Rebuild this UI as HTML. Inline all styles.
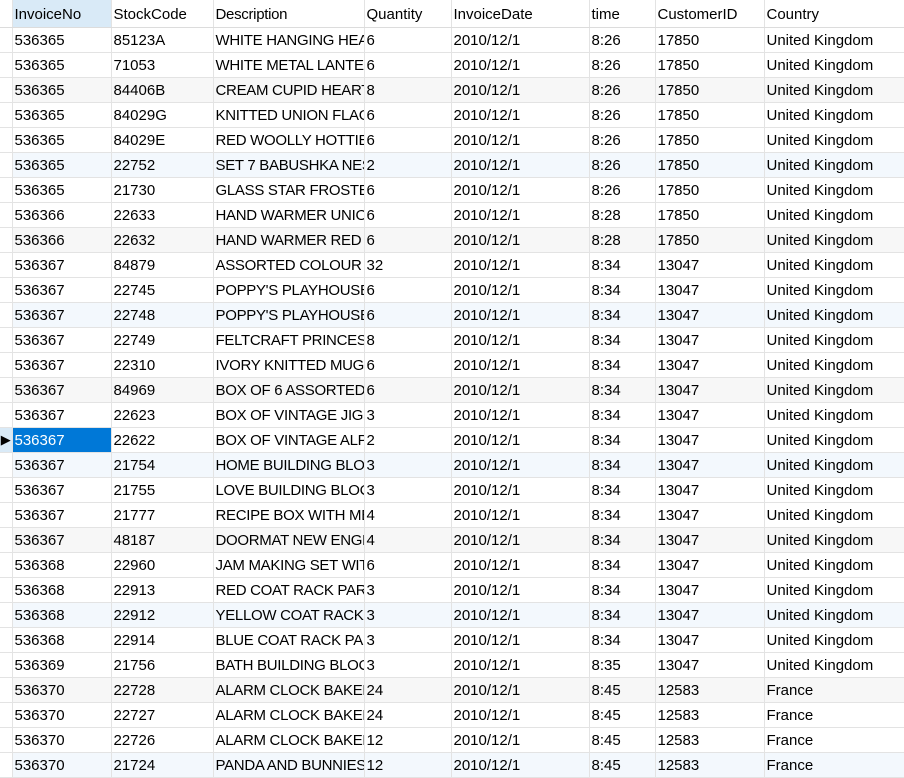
<!DOCTYPE html>
<html><head><meta charset="utf-8"><style>
body{margin:0;padding-top:1px;background:#fff;width:904px;height:773px;overflow:hidden;font-family:"Liberation Sans",sans-serif;font-size:15px;color:#000}
table{border-collapse:collapse;table-layout:fixed;width:904px;margin-top:-1px}
td{height:24px;padding:1px 0 0 2px;box-sizing:border-box;border-right:1px solid #e3e3e3;border-bottom:1px solid #e3e3e3;white-space:nowrap;overflow:hidden;text-overflow:clip;line-height:23px}
tr.h td{height:27px;padding-top:2px;border-bottom:1px solid #dcdcdc}
td.g{padding:0;font-size:13px;text-align:center}
td:nth-child(4){letter-spacing:-0.3px}
tr.a td{background:#f7f7f7}
tr.b td{background:#f3f8fd}
tr.a td.g,tr.b td.g{background:#fff}
.sel{background:#0078d7!important;color:#fff}
tr:not(.h) td{height:25px}
</style></head><body>
<table>
<colgroup><col style="width:12px"><col style="width:99px"><col style="width:102px"><col style="width:151px"><col style="width:87px"><col style="width:138px"><col style="width:66px"><col style="width:109px"><col style="width:140px"></colgroup>
<tr class="h"><td class="g"></td><td style="background:#d9eaf7">InvoiceNo</td><td>StockCode</td><td>Description</td><td>Quantity</td><td>InvoiceDate</td><td>time</td><td>CustomerID</td><td>Country</td></tr>
<tr><td class="g"></td><td>536365</td><td>85123A</td><td>WHITE HANGING HEART</td><td>6</td><td>2010/12/1</td><td>8:26</td><td>17850</td><td>United Kingdom</td></tr>
<tr><td class="g"></td><td>536365</td><td>71053</td><td>WHITE METAL LANTERN</td><td>6</td><td>2010/12/1</td><td>8:26</td><td>17850</td><td>United Kingdom</td></tr>
<tr class="a"><td class="g"></td><td>536365</td><td>84406B</td><td>CREAM CUPID HEARTS</td><td>8</td><td>2010/12/1</td><td>8:26</td><td>17850</td><td>United Kingdom</td></tr>
<tr><td class="g"></td><td>536365</td><td>84029G</td><td>KNITTED UNION FLAG</td><td>6</td><td>2010/12/1</td><td>8:26</td><td>17850</td><td>United Kingdom</td></tr>
<tr><td class="g"></td><td>536365</td><td>84029E</td><td>RED WOOLLY HOTTIE</td><td>6</td><td>2010/12/1</td><td>8:26</td><td>17850</td><td>United Kingdom</td></tr>
<tr class="b"><td class="g"></td><td>536365</td><td>22752</td><td>SET 7 BABUSHKA NESTING</td><td>2</td><td>2010/12/1</td><td>8:26</td><td>17850</td><td>United Kingdom</td></tr>
<tr><td class="g"></td><td>536365</td><td>21730</td><td>GLASS STAR FROSTED</td><td>6</td><td>2010/12/1</td><td>8:26</td><td>17850</td><td>United Kingdom</td></tr>
<tr><td class="g"></td><td>536366</td><td>22633</td><td>HAND WARMER UNION</td><td>6</td><td>2010/12/1</td><td>8:28</td><td>17850</td><td>United Kingdom</td></tr>
<tr class="a"><td class="g"></td><td>536366</td><td>22632</td><td>HAND WARMER RED P</td><td>6</td><td>2010/12/1</td><td>8:28</td><td>17850</td><td>United Kingdom</td></tr>
<tr><td class="g"></td><td>536367</td><td>84879</td><td>ASSORTED COLOUR BIRD</td><td>32</td><td>2010/12/1</td><td>8:34</td><td>13047</td><td>United Kingdom</td></tr>
<tr><td class="g"></td><td>536367</td><td>22745</td><td>POPPY'S PLAYHOUSE BED</td><td>6</td><td>2010/12/1</td><td>8:34</td><td>13047</td><td>United Kingdom</td></tr>
<tr class="b"><td class="g"></td><td>536367</td><td>22748</td><td>POPPY'S PLAYHOUSE KIT</td><td>6</td><td>2010/12/1</td><td>8:34</td><td>13047</td><td>United Kingdom</td></tr>
<tr><td class="g"></td><td>536367</td><td>22749</td><td>FELTCRAFT PRINCESS C</td><td>8</td><td>2010/12/1</td><td>8:34</td><td>13047</td><td>United Kingdom</td></tr>
<tr><td class="g"></td><td>536367</td><td>22310</td><td>IVORY KNITTED MUG C</td><td>6</td><td>2010/12/1</td><td>8:34</td><td>13047</td><td>United Kingdom</td></tr>
<tr class="a"><td class="g"></td><td>536367</td><td>84969</td><td>BOX OF 6 ASSORTED C</td><td>6</td><td>2010/12/1</td><td>8:34</td><td>13047</td><td>United Kingdom</td></tr>
<tr><td class="g"></td><td>536367</td><td>22623</td><td>BOX OF VINTAGE JIGSAW</td><td>3</td><td>2010/12/1</td><td>8:34</td><td>13047</td><td>United Kingdom</td></tr>
<tr><td class="g" style="background:#d9eaf7">&#9654;</td><td class="sel">536367</td><td>22622</td><td>BOX OF VINTAGE ALPHA</td><td>2</td><td>2010/12/1</td><td>8:34</td><td>13047</td><td>United Kingdom</td></tr>
<tr class="b"><td class="g"></td><td>536367</td><td>21754</td><td>HOME BUILDING BLOCK</td><td>3</td><td>2010/12/1</td><td>8:34</td><td>13047</td><td>United Kingdom</td></tr>
<tr><td class="g"></td><td>536367</td><td>21755</td><td>LOVE BUILDING BLOCK</td><td>3</td><td>2010/12/1</td><td>8:34</td><td>13047</td><td>United Kingdom</td></tr>
<tr><td class="g"></td><td>536367</td><td>21777</td><td>RECIPE BOX WITH METAL</td><td>4</td><td>2010/12/1</td><td>8:34</td><td>13047</td><td>United Kingdom</td></tr>
<tr class="a"><td class="g"></td><td>536367</td><td>48187</td><td>DOORMAT NEW ENGLAND</td><td>4</td><td>2010/12/1</td><td>8:34</td><td>13047</td><td>United Kingdom</td></tr>
<tr><td class="g"></td><td>536368</td><td>22960</td><td>JAM MAKING SET WITH</td><td>6</td><td>2010/12/1</td><td>8:34</td><td>13047</td><td>United Kingdom</td></tr>
<tr><td class="g"></td><td>536368</td><td>22913</td><td>RED COAT RACK PARIS</td><td>3</td><td>2010/12/1</td><td>8:34</td><td>13047</td><td>United Kingdom</td></tr>
<tr class="b"><td class="g"></td><td>536368</td><td>22912</td><td>YELLOW COAT RACK PARIS</td><td>3</td><td>2010/12/1</td><td>8:34</td><td>13047</td><td>United Kingdom</td></tr>
<tr><td class="g"></td><td>536368</td><td>22914</td><td>BLUE COAT RACK PARIS</td><td>3</td><td>2010/12/1</td><td>8:34</td><td>13047</td><td>United Kingdom</td></tr>
<tr><td class="g"></td><td>536369</td><td>21756</td><td>BATH BUILDING BLOCK</td><td>3</td><td>2010/12/1</td><td>8:35</td><td>13047</td><td>United Kingdom</td></tr>
<tr class="a"><td class="g"></td><td>536370</td><td>22728</td><td>ALARM CLOCK BAKELIKE</td><td>24</td><td>2010/12/1</td><td>8:45</td><td>12583</td><td>France</td></tr>
<tr><td class="g"></td><td>536370</td><td>22727</td><td>ALARM CLOCK BAKELIKE</td><td>24</td><td>2010/12/1</td><td>8:45</td><td>12583</td><td>France</td></tr>
<tr><td class="g"></td><td>536370</td><td>22726</td><td>ALARM CLOCK BAKELIKE</td><td>12</td><td>2010/12/1</td><td>8:45</td><td>12583</td><td>France</td></tr>
<tr class="b"><td class="g"></td><td>536370</td><td>21724</td><td>PANDA AND BUNNIES</td><td>12</td><td>2010/12/1</td><td>8:45</td><td>12583</td><td>France</td></tr>
</table>
</body></html>
